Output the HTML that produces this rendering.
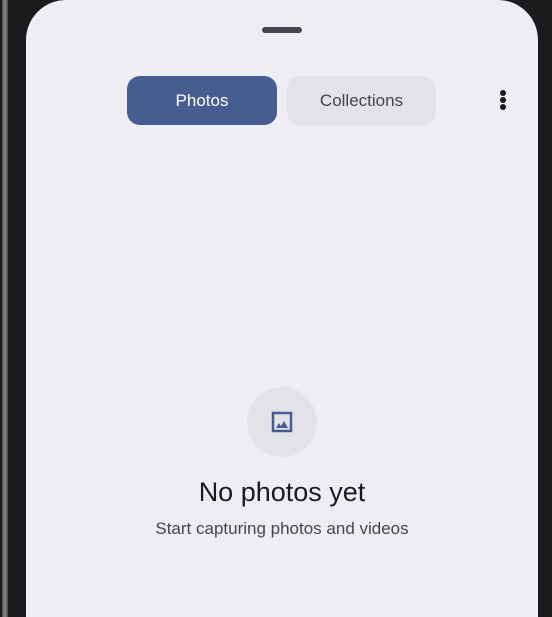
<!DOCTYPE html>
<html><head><style>
html,body{margin:0;width:552px;height:617px;overflow:hidden}
body{background:#1b1b1d;position:relative;font-family:"Liberation Sans",Roboto,sans-serif}
.edge{position:absolute;left:2px;top:0;width:6px;height:617px;background:linear-gradient(90deg,#555,#888,#444)}
.sheet{position:absolute;left:26px;top:0;width:512px;height:617px;background:#eeedf4;border-radius:40px 40px 0 0}
.handle{position:absolute;left:236px;top:27px;width:40px;height:6px;border-radius:3px;background:#45464f}
.pill{position:absolute;top:76px;height:49px;border-radius:13px;font-size:17px;display:flex;align-items:center;justify-content:center}
.p1{left:101px;width:150px;background:#475d92;color:#fff}
.p2{left:261px;width:149px;background:#e2e2e9;color:#44464f}
.dot{position:absolute;left:474px;width:6px;height:6px;border-radius:50%;background:#1a1b20}
.circ{position:absolute;left:221px;top:387px;width:70px;height:70px;border-radius:50%;background:#e2e2e9}
.t1{position:absolute;left:0;width:512px;top:477px;text-align:center;font-size:27px;color:#1a1b20}
.t2{position:absolute;left:0;width:512px;top:519px;text-align:center;font-size:17px;color:#44464f}
</style></head><body>
<div class="edge"></div>
<div class="sheet">
<div class="handle"></div>
<div class="pill p1">Photos</div>
<div class="pill p2">Collections</div>
<div class="dot" style="top:90px"></div>
<div class="dot" style="top:97px"></div>
<div class="dot" style="top:104px"></div>
<div class="circ"><svg width="70" height="70" viewBox="0 0 70 70"><rect x="26" y="26" width="18" height="18" fill="none" stroke="#475d92" stroke-width="2.5"/><path d="M29 41 L32 36 L34 39 L37 34 L41 41 Z" fill="#475d92"/></svg></div>
<div class="t1">No photos yet</div>
<div class="t2">Start capturing photos and videos</div>
</div>
</body></html>
